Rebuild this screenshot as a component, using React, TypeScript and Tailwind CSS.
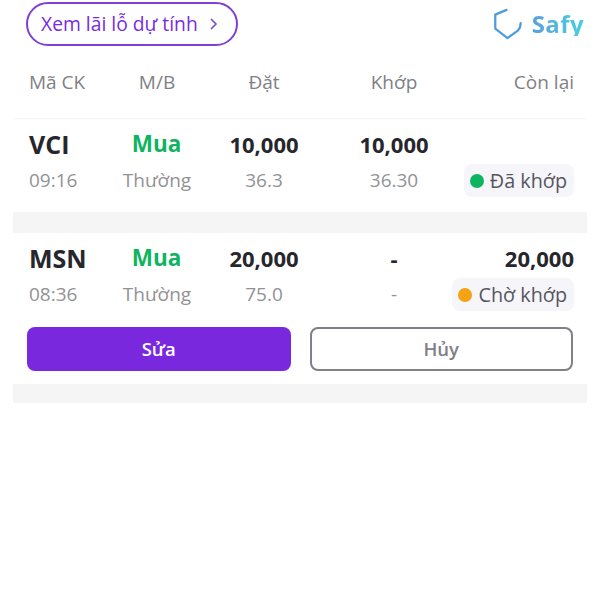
const gridCols = "grid grid-cols-[93px_70px_144px_116px_122px] items-center";

function Badge({ color, label }: { color: string; label: string }) {
  return (
    <div className="flex h-[33px] items-center gap-[6px] rounded-lg bg-[#f5f5fa] pl-[6px] pr-[7px] text-[19.8px] text-[#55555f] whitespace-nowrap">
      <span className={`h-[14px] w-[14px] rounded-full ${color}`} />
      {label}
    </div>
  );
}

function OrderRow(props: {
  code: string;
  time: string;
  ordered: string;
  price: string;
  matched: string;
  matchedPrice: string;
  remaining?: string;
  badge: React.ReactNode;
}) {
  return (
    <div className={`${gridCols} grid-rows-[35px_37px]`}>
      <div className="text-[25px] font-bold leading-none text-[#26262c]">{props.code}</div>
      <div className="pr-[1px] text-center text-[22.5px] font-bold leading-none text-[#0eb45f]">Mua</div>
      <div className="pb-[2px] text-center text-[22px] font-bold leading-none text-[#26262c]">{props.ordered}</div>
      <div className="pb-[2px] text-center text-[22px] font-bold leading-none text-[#26262c]">{props.matched}</div>
      <div className="pb-[2px] text-right text-[22px] font-bold leading-none text-[#26262c]">{props.remaining}</div>
      <div className="text-[19px] leading-none text-[#929296]">{props.time}</div>
      <div className="text-center text-[19px] leading-none text-[#929296]">Thường</div>
      <div className="text-center text-[19px] leading-none text-[#929296]">{props.price}</div>
      <div className="text-center text-[19px] leading-none text-[#929296]">{props.matchedPrice}</div>
      <div className="flex justify-end">{props.badge}</div>
    </div>
  );
}

export default function App() {
  return (
    <div className="h-[600px] w-[600px] overflow-hidden bg-white font-['Open_Sans',sans-serif]">
      <div className="flex items-center justify-between pl-[26px] pr-[16px] pt-[2px]">
        <button className="flex h-[44px] w-[212px] items-center gap-[11px] rounded-full border-2 border-[#7e3fd6] pl-[13px] text-[19.3px] text-[#7a2be0]">
          Xem lãi lỗ dự tính
          <svg width="9" height="14" viewBox="0 0 9 14" fill="none">
            <path d="M2 2l5 5-5 5" stroke="#7a4bc8" strokeWidth="1.6" />
          </svg>
        </button>
        <div className="flex items-center gap-[10px]">
          <svg width="29" height="32" viewBox="0 0 30 34" fill="none">
            <path
              d="M14 2 L2 7 V22 L15 32 L26 24 C28 22 29 20 29 16"
              stroke="#4f9cdc"
              strokeWidth="2.4"
              strokeLinecap="round"
              strokeLinejoin="round"
            />
          </svg>
          <span className="bg-gradient-to-r from-[#5a9fdc] to-[#45d0de] bg-clip-text text-[24px] font-bold leading-none tracking-[0.4px] text-transparent">
            Safy
          </span>
        </div>
      </div>

      <div className={`${gridCols} h-[72px] w-[603px] px-[29px] text-[19px] text-[#808086]`}>
        <div>Mã CK</div>
        <div className="text-center">M/B</div>
        <div className="text-center">Đặt</div>
        <div className="text-center">Khớp</div>
        <div className="text-right">Còn lại</div>
      </div>

      <div className="mx-[13px] w-[574px]">
        <div className="h-[94px] rounded-t border-t border-[#f4f4f4] px-[16px] pt-[8px]">
          <OrderRow
            code="VCI"
            time="09:16"
            ordered="10,000"
            price="36.3"
            matched="10,000"
            matchedPrice="36.30"
            badge={<Badge color="bg-[#0eb45f]" label="Đã khớp" />}
          />
        </div>
        <div className="h-[21px] bg-[#f5f5f5]" />
        <div className="h-[151px] px-[14px] pt-[8px]">
          <div className="px-[2px]">
            <OrderRow
              code="MSN"
              time="08:36"
              ordered="20,000"
              price="75.0"
              matched="-"
              matchedPrice="-"
              remaining="20,000"
              badge={<Badge color="bg-[#f5a313]" label="Chờ khớp" />}
            />
          </div>
          <div className="mt-[14px] flex gap-[19px]">
            <button className="h-[44px] w-[264px] rounded-lg bg-[#7a28de] text-[18.5px] font-semibold text-white">
              Sửa
            </button>
            <button className="h-[44px] w-[264px] rounded-lg border-2 border-[#808086] text-[18.5px] font-semibold text-[#808086]">
              Hủy
            </button>
          </div>
        </div>
        <div className="h-[19px] bg-[#f5f5f5]" />
      </div>
    </div>
  );
}
